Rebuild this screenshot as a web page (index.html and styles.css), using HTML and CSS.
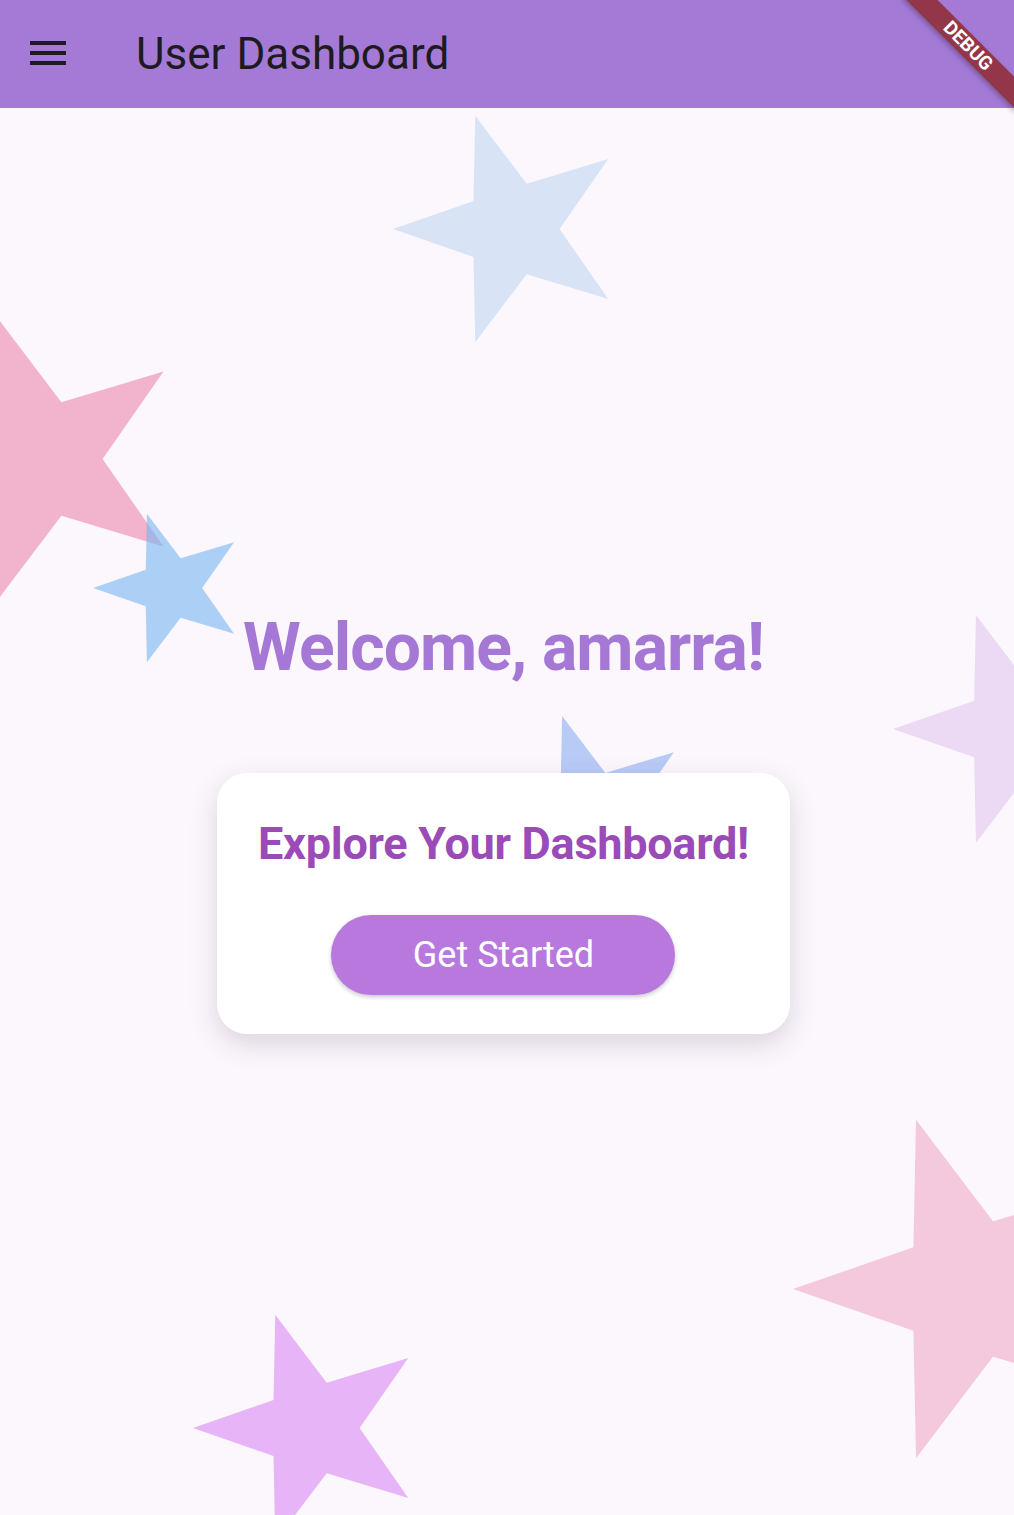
FILE: index.html
```html
<!DOCTYPE html>
<html lang="en">
<head>
<meta charset="utf-8">
<title>User Dashboard</title>
<link rel="stylesheet" href="styles.css">
</head>
<body>
  <div class="stars" aria-hidden="true">
    <svg class="star star-1" viewBox="0 0 200 200"><path d="M0 100 L67.64 76.49 L69.1 4.9 L112.36 61.96 L180.9 41.2 L140 100 L180.9 158.8 L112.36 138.04 L69.1 195.1 L67.64 123.51 Z"/></svg>
    <svg class="star star-2" viewBox="0 0 200 200"><path d="M0 100 L67.64 76.49 L69.1 4.9 L112.36 61.96 L180.9 41.2 L140 100 L180.9 158.8 L112.36 138.04 L69.1 195.1 L67.64 123.51 Z"/></svg>
    <svg class="star star-3" viewBox="0 0 200 200"><path d="M0 100 L67.64 76.49 L69.1 4.9 L112.36 61.96 L180.9 41.2 L140 100 L180.9 158.8 L112.36 138.04 L69.1 195.1 L67.64 123.51 Z"/></svg>
    <svg class="star star-4" viewBox="0 0 200 200"><path d="M0 100 L67.64 76.49 L69.1 4.9 L112.36 61.96 L180.9 41.2 L140 100 L180.9 158.8 L112.36 138.04 L69.1 195.1 L67.64 123.51 Z"/></svg>
    <svg class="star star-5" viewBox="0 0 200 200"><path d="M0 100 L67.64 76.49 L69.1 4.9 L112.36 61.96 L180.9 41.2 L140 100 L180.9 158.8 L112.36 138.04 L69.1 195.1 L67.64 123.51 Z"/></svg>
    <svg class="star star-6" viewBox="0 0 200 200"><path d="M0 100 L67.64 76.49 L69.1 4.9 L112.36 61.96 L180.9 41.2 L140 100 L180.9 158.8 L112.36 138.04 L69.1 195.1 L67.64 123.51 Z"/></svg>
    <svg class="star star-7" viewBox="0 0 200 200"><path d="M0 100 L67.64 76.49 L69.1 4.9 L112.36 61.96 L180.9 41.2 L140 100 L180.9 158.8 L112.36 138.04 L69.1 195.1 L67.64 123.51 Z"/></svg>
  </div>

  <header class="appbar">
    <button class="menu-btn" aria-label="Open menu">
      <svg viewBox="0 0 36 26" width="36" height="26"><rect x="0" y="0" width="36" height="4"/><rect x="0" y="10" width="36" height="4"/><rect x="0" y="20" width="36" height="4"/></svg>
    </button>
    <h1 class="appbar-title">User Dashboard</h1>
  </header>

  <main class="content">
    <h2 class="welcome">Welcome, amarra!</h2>
    <section class="card">
      <h3 class="card-title">Explore Your Dashboard!</h3>
      <button class="cta">Get Started</button>
    </section>
  </main>

  <div class="debug-banner">DEBUG</div>
</body>
</html>
```

FILE: styles.css
```css
html, body {
  margin: 0;
  padding: 0;
}

body {
  position: relative;
  width: 1014px;
  height: 1515px;
  overflow: hidden;
  background: #fcf7fd;
  font-family: Roboto, "Noto Sans", "Liberation Sans", sans-serif;
  display: flex;
  flex-direction: column;
}

/* decorative star canvas */
.stars {
  position: absolute;
  inset: 0;
  z-index: 0;
  overflow: hidden;
}

.star {
  position: absolute;
  display: block;
}

.star-1 { left: 393px; top: 110px; width: 238px; height: 238px; fill: #d8e4f6; }
.star-2 { left: -106.5px; top: 309.5px; width: 298px; height: 298px; fill: #f2b3cc; }
.star-3 { left: 93px; top: 510px; width: 156px; height: 156px; fill: rgba(119, 182, 240, 0.6); }
.star-4 { left: 493px; top: 711px; width: 200px; height: 200px; fill: #b8caf6; }
.star-5 { left: 893px; top: 609px; width: 240px; height: 240px; fill: #ecdaf4; }
.star-6 { left: 793px; top: 1111px; width: 356px; height: 356px; fill: #f4c9dd; }
.star-7 { left: 193px; top: 1309px; width: 238px; height: 238px; fill: #e8b4f8; }

/* app bar */
.appbar {
  position: relative;
  z-index: 2;
  height: 108px;
  flex: 0 0 108px;
  background: #a47ad6;
  display: flex;
  align-items: center;
}

.menu-btn {
  margin-left: 30px;
  width: 36px;
  height: 26px;
  padding: 0;
  border: 0;
  background: none;
  display: flex;
  fill: #1d1b20;
}

.appbar-title {
  margin: 0 0 0 70px;
  font-size: 44px;
  font-weight: 400;
  color: #1d1b20;
  letter-spacing: 0;
}

/* main content */
.content {
  position: relative;
  z-index: 1;
  flex: 1;
  display: flex;
  flex-direction: column;
  align-items: center;
  justify-content: center;
  padding-top: 20px;
  padding-right: 7px;
}

.welcome {
  margin: 0 0 87px;
  font-size: 66px;
  font-weight: 700;
  letter-spacing: -0.9px;
  color: #a478d4;
  line-height: normal;
}

.card {
  background: #ffffff;
  border-radius: 30px;
  padding: 44px 41px 39px;
  display: flex;
  flex-direction: column;
  align-items: center;
  box-shadow: 0 10px 28px rgba(70, 50, 80, 0.18);
}

.card-title {
  margin: 0 0 45px;
  font-size: 45px;
  font-weight: 700;
  letter-spacing: -0.27px;
  color: #9a4bb7;
  line-height: normal;
}

.cta {
  width: 344px;
  height: 80px;
  border: 0;
  border-radius: 40px;
  background: #b978de;
  color: #ffffff;
  font-family: Roboto, "Noto Sans", "Liberation Sans", sans-serif;
  font-size: 36px;
  font-weight: 400;
  box-shadow: 0 2px 4px rgba(0, 0, 0, 0.22);
  padding: 0;
}

/* debug ribbon */
.debug-banner {
  position: absolute;
  z-index: 3;
  left: 888px;
  top: 35px;
  width: 160px;
  height: 22px;
  transform: rotate(45deg);
  background: #933649;
  color: #ffffff;
  font-family: Roboto, "Liberation Sans", sans-serif;
  font-weight: 700;
  font-size: 19px;
  line-height: 22px;
  text-align: center;
  box-shadow: 0 3px 5px rgba(0, 0, 0, 0.25);
}
```
